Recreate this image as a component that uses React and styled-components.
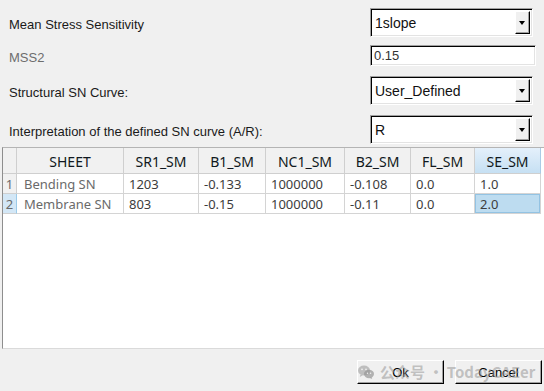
import React from "react";
import styled, { createGlobalStyle } from "styled-components";

const Global = createGlobalStyle`
  html, body { margin: 0; padding: 0; background: #f0f0f0; }
  body { font-family: "Liberation Sans", Arial, sans-serif; }
`;

const Page = styled.div`
  position: relative;
  width: 544px;
  height: 391px;
  background: #f0f0f0;
  display: flex;
  flex-direction: column;
  overflow: hidden;
`;

const Form = styled.div`
  display: flex;
  flex-direction: column;
  gap: 10px;
  padding-top: 8px;
`;

const Row = styled.div`
  display: grid;
  grid-template-columns: 361px auto;
  align-items: center;
  height: ${(p) => p.$h}px;
  margin-top: ${(p) => p.$mt || 0}px;
  padding-left: 9px;
`;

const Label = styled.div`
  font-size: 13px;
  color: ${(p) => (p.$dim ? "#6d6d6d" : "#1a1a1a")};
  padding-top: 3px;
  white-space: nowrap;
`;

const Sunken = styled.div`
  box-sizing: border-box;
  height: 100%;
  background: #fff;
  border-top: 1px solid #a0a0a0;
  border-left: 1px solid #a0a0a0;
  border-right: 1px solid #fff;
  border-bottom: 1px solid #fff;
  box-shadow: inset 1px 1px 0 #000, inset -1px -1px 0 #e3e3e3;
`;

const Combo = styled(Sunken)`
  width: ${(p) => p.$w}px;
  display: flex;
  align-items: center;
  padding: 2px 2px 2px 3px;
`;

const ComboText = styled.div`
  flex: 1;
  font-size: 14px;
  color: #111;
  padding-left: 1px;
`;

const DropButton = styled.div`
  box-sizing: border-box;
  width: 15px;
  height: 23px;
  background: #f0f0f0;
  border-top: 1px solid #fff;
  border-left: 1px solid #fff;
  border-right: 1px solid #000;
  border-bottom: 1px solid #000;
  box-shadow: inset -1px -1px 0 #a0a0a0;
  display: flex;
  align-items: center;
  justify-content: center;
`;

const Arrow = styled.div`
  width: 0;
  height: 0;
  border-left: 3.5px solid transparent;
  border-right: 3.5px solid transparent;
  border-top: 4px solid #000;
  margin-right: 1px;
`;

const Field = styled(Sunken)`
  width: ${(p) => p.$w}px;
  font-size: 13px;
  color: #333;
  display: flex;
  align-items: center;
  padding-left: 3px;
`;

const TableFrame = styled.div`
  box-sizing: border-box;
  margin: 5px 0 0 2px;
  height: 202px;
  background: #fff;
  border-left: 1px solid #8e8e8e;
  border-top: 1px solid #b4b4b4;
  border-bottom: 1px solid #dadada;
  font-family: "Noto Sans", "Open Sans", sans-serif;
  font-size: 13px;
`;

const Grid = styled.div`
  display: grid;
  grid-template-columns: 14px 107px 75px 67px 79px 66px 64px 66px;
`;

const HeadCell = styled.div`
  box-sizing: border-box;
  height: 26px;
  display: flex;
  align-items: center;
  justify-content: center;
  font-size: 14px;
  color: #101820;
  background: ${(p) =>
    p.$sel ? "linear-gradient(#e4f0fb, #c6e0f3)" : "#f1f1f1"};
  border-right: 1px solid ${(p) => (p.$sel ? "#a9cbe6" : "#cfcfcf")};
  border-bottom: 1px solid #cfcfcf;
  padding-top: 1px;
`;

const RowHead = styled.div`
  box-sizing: border-box;
  height: 20px;
  display: flex;
  align-items: center;
  justify-content: center;
  color: #6a6a6a;
  background: ${(p) => (p.$sel ? "#d3e7f6" : "#f1f1f1")};
  border-right: 1px solid ${(p) => (p.$sel ? "#9ccbe9" : "#cfcfcf")};
  border-bottom: 1px solid #cfcfcf;
`;

const Cell = styled.div`
  box-sizing: border-box;
  height: 20px;
  display: flex;
  align-items: center;
  padding-left: ${(p) => (p.$name ? 7 : 5)}px;
  color: ${(p) => (p.$name ? "#6a6a6a" : "#3c3c3c")};
  background: ${(p) => (p.$sel ? "#bddcf0" : "#fff")};
  border-right: 1px solid #d4d4d4;
  border-bottom: 1px solid #d4d4d4;
  box-shadow: ${(p) => (p.$sel ? "inset 0 0 0 1px #93c3e3" : "none")};
  white-space: nowrap;
  overflow: hidden;
`;

const Footer = styled.div`
  display: flex;
  justify-content: flex-end;
  gap: 11px;
  padding: 11px 2px 0 0;
`;

const Button = styled.div`
  box-sizing: border-box;
  width: 87px;
  height: 24px;
  background: #f0f0f0;
  border-top: 1px solid #fff;
  border-left: 1px solid #fff;
  border-right: 1px solid #000;
  border-bottom: 1px solid #000;
  box-shadow: inset -1px -1px 0 #a0a0a0;
  display: flex;
  align-items: center;
  justify-content: center;
  font-size: 13px;
  color: #000;
`;

const Watermark = styled.div`
  position: absolute;
  left: 358px;
  top: 361px;
  display: flex;
  align-items: center;
  gap: 6px;
  font-family: "Noto Sans CJK SC", "Noto Sans", sans-serif;
  font-size: 15px;
  font-weight: 700;
  color: rgba(150, 150, 150, 0.55);
  pointer-events: none;
  white-space: nowrap;
`;

const columns = ["SHEET", "SR1_SM", "B1_SM", "NC1_SM", "B2_SM", "FL_SM", "SE_SM"];
const rows = [
  ["Bending SN", "1203", "-0.133", "1000000", "-0.108", "0.0", "1.0"],
  ["Membrane SN", "803", "-0.15", "1000000", "-0.11", "0.0", "2.0"],
];

function ComboBox({ value, w }) {
  return (
    <Combo $w={w}>
      <ComboText>{value}</ComboText>
      <DropButton>
        <Arrow />
      </DropButton>
    </Combo>
  );
}

function WeChatIcon() {
  return (
    <svg width="16" height="14" viewBox="0 0 16 14">
      <ellipse cx="6" cy="5.5" rx="6" ry="5" fill="rgba(150,150,150,0.55)" />
      <path d="M2.5 9.5 L1.8 12 L4.8 10.3 Z" fill="rgba(150,150,150,0.55)" />
      <ellipse cx="11" cy="9" rx="5" ry="4.2" fill="rgba(150,150,150,0.7)" />
      <path d="M13.5 12.3 L14.2 14 L11.8 13 Z" fill="rgba(150,150,150,0.7)" />
      <circle cx="4" cy="4.3" r="0.9" fill="#f0f0f0" />
      <circle cx="8" cy="4.3" r="0.9" fill="#f0f0f0" />
      <circle cx="9.5" cy="8.3" r="0.7" fill="#f0f0f0" />
      <circle cx="12.6" cy="8.3" r="0.7" fill="#f0f0f0" />
    </svg>
  );
}

export default function App() {
  return (
    <Page>
      <Global />
      <Form>
        <Row $h={27}>
          <Label>Mean Stress Sensitivity</Label>
          <ComboBox value="1slope" w={163} />
        </Row>
        <Row $h={21}>
          <Label $dim>MSS2</Label>
          <Field $w={166}>0.15</Field>
        </Row>
        <Row $h={27}>
          <Label>Structural SN Curve:</Label>
          <ComboBox value="User_Defined" w={163} />
        </Row>
        <Row $h={27} $mt={2}>
          <Label>Interpretation of the defined SN curve (A/R):</Label>
          <ComboBox value="R" w={163} />
        </Row>
      </Form>
      <TableFrame>
        <Grid>
          <HeadCell />
          {columns.map((c) => (
            <HeadCell key={c} $sel={c === "SE_SM"}>
              {c}
            </HeadCell>
          ))}
          {rows.map((r, i) => (
            <React.Fragment key={i}>
              <RowHead $sel={i === 1}>{i + 1}</RowHead>
              {r.map((v, j) => (
                <Cell key={j} $name={j === 0} $sel={i === 1 && j === 6}>
                  {v}
                </Cell>
              ))}
            </React.Fragment>
          ))}
        </Grid>
      </TableFrame>
      <Footer>
        <Button>Ok</Button>
        <Button>Cancel</Button>
      </Footer>
      <Watermark>
        <WeChatIcon />
        <span>公众号 · TodayCAEer</span>
      </Watermark>
    </Page>
  );
}
